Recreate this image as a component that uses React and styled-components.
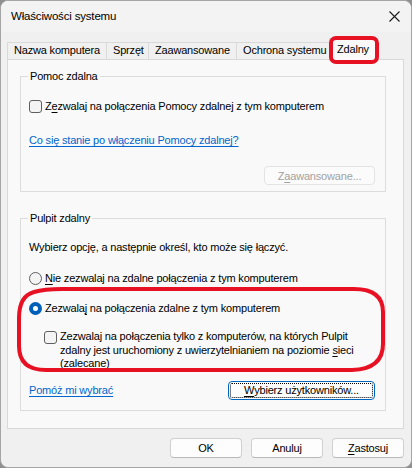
import styled, { createGlobalStyle } from 'styled-components';

const GlobalStyle = createGlobalStyle`
  html, body {
    margin: 0;
    padding: 0;
    background: #8f8f8f;
  }
  body {
    font-family: "Segoe UI", "Liberation Sans", Arial, sans-serif;
    font-size: 11px;
    letter-spacing: -0.18px;
    color: #000;
  }
  #root {
    width: 412px;
    height: 468px;
  }
`;

const Window = styled.div`
  position: relative;
  box-sizing: border-box;
  width: 412px;
  height: 468px;
  background: #f0f0f0;
  border: 1px solid #a5a5a5;
  border-radius: 8px;
  overflow: hidden;
  display: flex;
  flex-direction: column;
`;

const TitleBar = styled.div`
  height: 31px;
  flex: none;
  display: flex;
  align-items: center;
  justify-content: space-between;
  padding: 0 11px 0 10px;
  background: #f3f3f3;
`;

const Title = styled.span`
  font-size: 11.5px;
  line-height: 16px;
  margin-top: -2px;
`;

const Close = styled.svg`
  width: 11px;
  height: 11px;
  margin-top: -1px;
`;

const TabStrip = styled.div`
  height: 27px;
  flex: none;
  display: flex;
  align-items: flex-end;
  margin-left: 6px;
`;

const Tab = styled.div`
  position: relative;
  box-sizing: border-box;
  width: ${p => p.$w}px;
  height: ${p => (p.$active ? 22 : 17)}px;
  margin-left: -1px;
  margin-bottom: ${p => (p.$active ? -1 : 0)}px;
  padding: ${p => (p.$active ? '3px 0 0 7px' : '0 0 0 6px')};
  border: 1px solid #d9d9d9;
  border-bottom: none;
  background: ${p => (p.$active ? '#f9f9f9' : '#f0f0f0')};
  z-index: ${p => (p.$active ? 2 : 0)};
  line-height: 15px;
  white-space: nowrap;
  &:first-child {
    margin-left: 0;
  }
`;

const TabMark = styled.span`
  position: absolute;
  left: -1px;
  top: -3px;
  width: 50px;
  height: 28px;
  box-sizing: border-box;
  border: 4px solid #e81123;
  border-radius: 7px;
  pointer-events: none;
`;

const Panel = styled.div`
  position: relative;
  z-index: 1;
  box-sizing: border-box;
  width: 397px;
  height: 370px;
  flex: none;
  margin-left: 6px;
  border: 1px solid #d9d9d9;
  background: #f9f9f9;
  padding: 0 17px 0 12px;
  display: flex;
  flex-direction: column;
`;

const Group = styled.fieldset`
  margin: ${p => p.$top}px 0 0;
  padding: ${p => p.$pad};
  border: 1px solid #dcdcdc;
  min-width: 0;
  display: flex;
  flex-direction: column;
`;

const Legend = styled.legend`
  margin-left: -1px;
  padding: 0 2px;
  line-height: 16px;
`;

const Row = styled.div`
  display: flex;
  align-items: center;
  justify-content: ${p => p.$justify || 'flex-start'};
  line-height: 16px;
  margin-top: ${p => p.$top || 0}px;
`;

const Para = styled.div`
  line-height: 16px;
  margin-top: ${p => p.$top || 0}px;
`;

const CheckRow = styled.div`
  display: flex;
  align-items: flex-start;
  margin-top: ${p => p.$top || 0}px;
  margin-left: ${p => p.$indent || 0}px;
  line-height: 13.5px;
`;

const Box = styled.span`
  flex: none;
  box-sizing: border-box;
  width: 13px;
  height: 13px;
  margin-right: 3px;
  margin-top: ${p => p.$top || 0}px;
  border: 1px solid #5f5f5f;
  border-radius: 3px;
  background: #f4f4f4;
`;

const Radio = styled.span`
  flex: none;
  box-sizing: border-box;
  width: 13px;
  height: 13px;
  margin-right: 3px;
  border-radius: 50%;
  border: ${p => (p.$on ? '4px solid #005fb8' : '1px solid #5f5f5f')};
  background: ${p => (p.$on ? '#ffffff' : '#f4f4f4')};
`;

const Key = styled.span`
  text-decoration: underline;
  text-underline-offset: 2px;
`;

const Link = styled.a`
  color: #0066cc;
  text-decoration: underline;
  text-underline-offset: 2px;
  cursor: pointer;
`;

const Button = styled.button`
  box-sizing: border-box;
  width: ${p => p.$w}px;
  height: ${p => p.$h || 20}px;
  padding: 0;
  font: inherit;
  letter-spacing: inherit;
  color: ${p => (p.disabled ? '#a2a2a2' : '#000')};
  background: ${p => (p.disabled ? '#fbfbfb' : '#fdfdfd')};
  border: 1px solid ${p => (p.$focus ? '#0067c0' : p.disabled ? '#e3e3e3' : '#d0d0d0')};
  border-bottom-color: ${p => (p.$focus ? '#0067c0' : p.disabled ? '#e3e3e3' : '#b8b8b8')};
  border-radius: 4px;
  outline: ${p => (p.$focus ? '1px dotted #000' : 'none')};
  outline-offset: -3px;
`;

const Footer = styled.div`
  display: flex;
  justify-content: flex-end;
  gap: 9px;
  margin-top: 9px;
  padding-right: 7px;
`;

const Annotation = styled.svg`
  position: absolute;
  left: -1px;
  top: -1px;
  width: 412px;
  height: 468px;
  pointer-events: none;
  z-index: 5;
`;

const tabs = [
  { label: 'Nazwa komputera', w: 100 },
  { label: 'Sprzęt', w: 43 },
  { label: 'Zaawansowane', w: 89 },
  { label: 'Ochrona systemu', w: 94 },
  { label: 'Zdalny', w: 47, active: true },
];

export default function App() {
  return (
    <>
      <GlobalStyle />
      <Window>
        <TitleBar>
          <Title>Właściwości systemu</Title>
          <Close viewBox="0 0 11 11">
            <path d="M0.5 0.5 L10.5 10.5 M10.5 0.5 L0.5 10.5" stroke="#1a1a1a" strokeWidth="1.1" fill="none" />
          </Close>
        </TitleBar>

        <TabStrip>
          {tabs.map(t => (
            <Tab key={t.label} $w={t.w} $active={t.active}>
              {t.label}
              {t.active && <TabMark />}
            </Tab>
          ))}
        </TabStrip>

        <Panel>
          <Group $top={8} $pad="14px 10px 6px 8px">
            <Legend>Pomoc zdalna</Legend>
            <Row>
              <Box />
              <span>Z<Key>e</Key>zwalaj na połączenia Pomocy zdalnej z tym komputerem</span>
            </Row>
            <Row $top={18}>
              <Link>Co się stanie po włączeniu Pomocy zdalnej?</Link>
            </Row>
            <Row $top={18} $justify="flex-end">
              <Button disabled $w={111} $h={19}>Z<Key>a</Key>awansowane...</Button>
            </Row>
          </Group>

          <Group $top={18} $pad="13px 10px 10px 8px">
            <Legend>Pulpit zdalny</Legend>
            <Para>Wybierz opcję, a następnie określ, kto może się łączyć.</Para>
            <Row $top={15}>
              <Radio />
              <span><Key>N</Key>ie zezwalaj na zdalne połączenia z tym komputerem</span>
            </Row>
            <Row $top={14}>
              <Radio $on />
              <span>Zezwala<Key>j</Key> na połączenia zdalne z tym komputerem</span>
            </Row>
            <CheckRow $top={14} $indent={15}>
              <Box $top={1} />
              <span>
                Zezwalaj na połączenia tylko z komputerów, na których Pulpit
                <br />
                zdalny jest uruchomiony z uwierzytelnianiem na poziomie <Key>s</Key>ieci
                <br />
                (zalecane)
              </span>
            </CheckRow>
            <Row $top={10} $justify="space-between">
              <Link>Pomóż mi wybrać</Link>
              <Button $focus $w={147} $h={19}><Key>W</Key>ybierz użytkowników...</Button>
            </Row>
          </Group>
        </Panel>

        <Footer>
          <Button $w={72}>OK</Button>
          <Button $w={72}>Anuluj</Button>
          <Button $w={72}><Key>Z</Key>astosuj</Button>
        </Footer>

        <Annotation viewBox="0 0 412 468">
          <path
            d="M34 292 Q19 296 19 318 L19 346 Q19 370 46 370 L352 370 Q383 369 383 344 L383 312 Q383 289 354 289 L62 289 Q44 289 34 292 Z"
            fill="none"
            stroke="#e81123"
            strokeWidth="4"
          />
        </Annotation>
      </Window>
    </>
  );
}
